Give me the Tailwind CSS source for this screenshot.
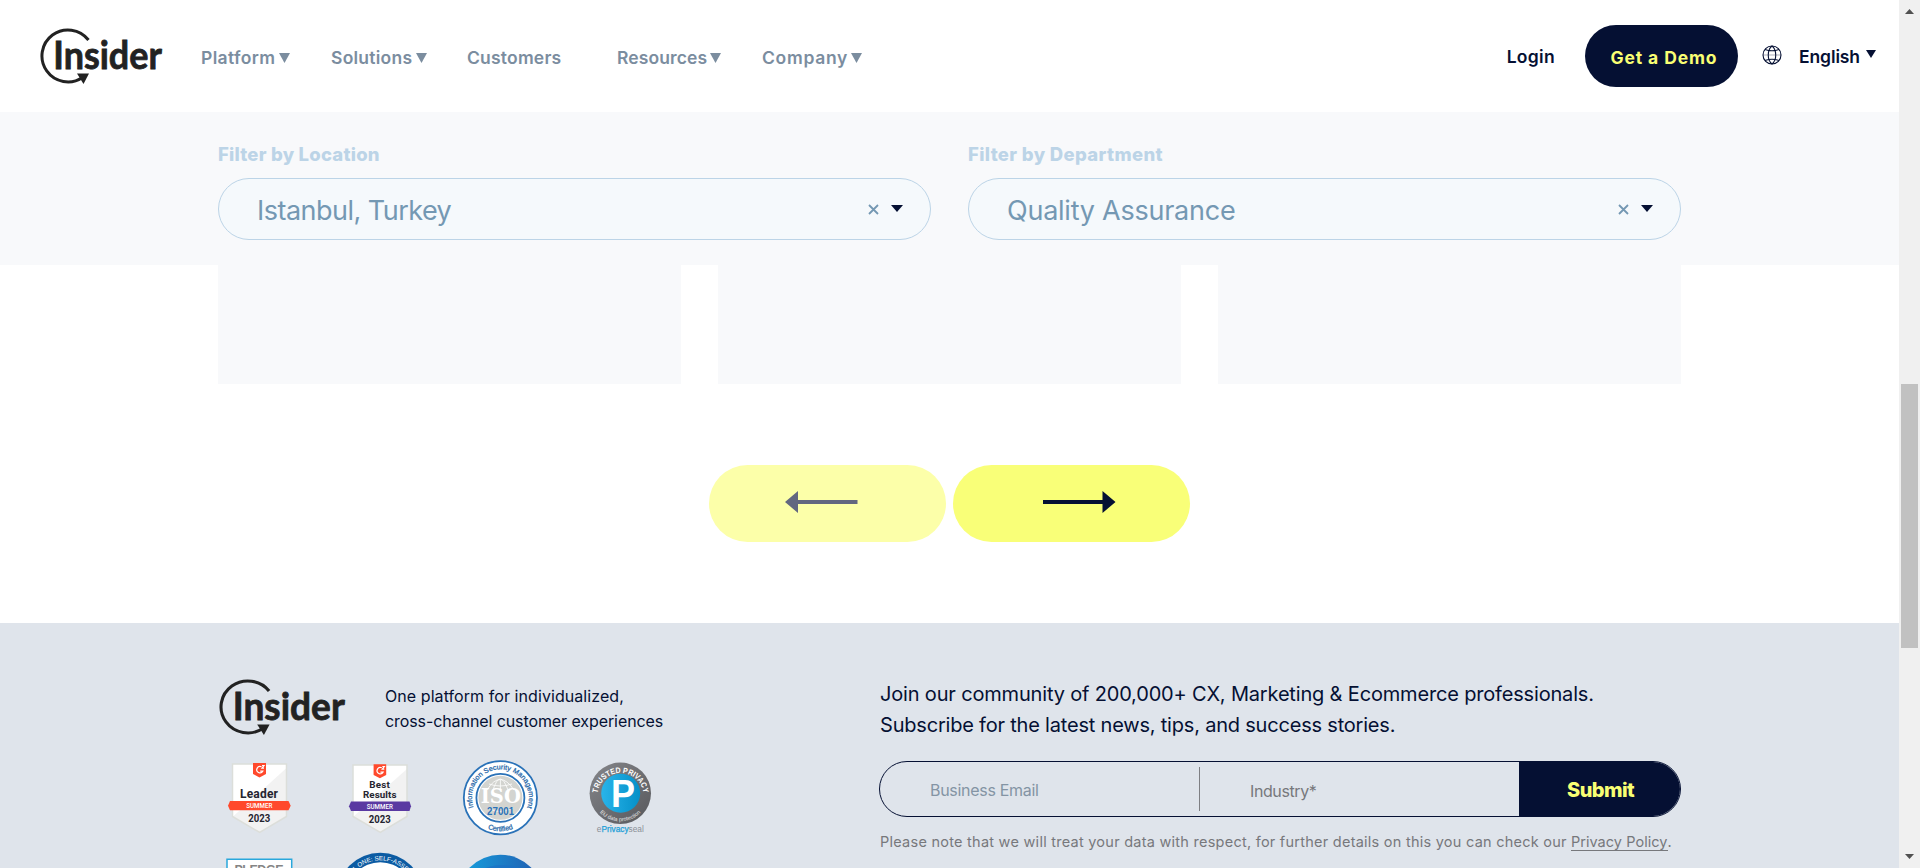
<!DOCTYPE html>
<html lang="en">
<head>
<meta charset="utf-8">
<title>Insider</title>
<script src="https://cdn.jsdelivr.net/npm/@tailwindcss/browser@4"></script>
</head>
<body class="flex h-[868px] w-[1920px] overflow-hidden bg-white font-['Inter',sans-serif] whitespace-nowrap text-[#051033]">
<svg class="hidden">
  <symbol id="logo" viewBox="0 0 123 57">
    <path d="M48.500 12A26 26 0 1 0 42.500 49.500" fill="none" stroke="#222" stroke-width="3"/>
    <path d="M37 45.500h12l-5.500 10.500z" fill="#222"/>
    <text x="13.300" y="41.300" font-family="Lato" font-weight="700" font-size="39" stroke="#222" stroke-width=".8" fill="#222" textLength="108.500" lengthAdjust="spacingAndGlyphs">Insider</text>
  </symbol>
</svg>
<div class="flex w-[1899px] flex-col">
  <header class="flex h-28 items-center pl-10 text-[17.5px] font-semibold text-[#7b8d9f]">
    <svg class="h-[57px] w-[123px]"><use href="#logo"/></svg>
    <nav class="ml-[38px] flex flex-1 pt-[4px]">
      <div class="flex w-[130px] items-center gap-1"><span class="tracking-[0.37px]">Platform</span><svg class="h-[10px] w-[11px]" fill="currentColor"><path d="M0 0h11L5.500 10z"/></svg></div>
      <div class="flex w-[136px] items-center gap-1"><span class="tracking-[0.25px]">Solutions</span><svg class="h-[10px] w-[11px]" fill="currentColor"><path d="M0 0h11L5.500 10z"/></svg></div>
      <div class="flex w-[150px] items-center"><span class="tracking-[0.2px]">Customers</span></div>
      <div class="flex w-[145px] items-center gap-[3px]"><span class="tracking-[0.1px]">Resources</span><svg class="h-[10px] w-[11px]" fill="currentColor"><path d="M0 0h11L5.500 10z"/></svg></div>
      <div class="flex items-center gap-[3px]"><span class="tracking-[0.69px]">Company</span><svg class="h-[10px] w-[11px]" fill="currentColor"><path d="M0 0h11L5.500 10z"/></svg></div>
    </nav>
    <div class="flex items-center text-[#051033]">
      <span class="mr-[30px] pt-[2px] tracking-[0.3px]">Login</span>
      <a class="mr-[24px] flex h-[62px] w-[153px] items-center justify-center rounded-full bg-[#051033] pt-[4px] pl-[5px] font-bold text-[#f9ff73]"><span class="tracking-[0.88px]">Get a Demo</span></a>
      <svg class="mr-[17px] mb-[2px] h-5 w-5" viewBox="0 0 20 20" fill="none" stroke="#051033" stroke-width="1.100"><circle cx="10" cy="10" r="9"/><path d="M10 1C5 5 5 15 10 19M10 1c5 4 5 14 0 18M3 4.500q7 2.500 14 0M3 15.500q7-2.500 14 0"/><path d="M1 10h18" stroke-opacity=".3"/></svg>
      <span class="pt-[2px] tracking-[-0.1px]">English</span>
      <svg class="mr-[23px] mb-1 ml-[6px] h-2 w-[10px]" fill="currentColor"><path d="M0 0h10L5 8z"/></svg>
    </div>
  </header>
  <section class="flex h-[153px] gap-[37px] bg-[#f8f9fb] px-[218px] pt-[29px]">
    <div class="w-[713px]">
      <div class="h-[37px] text-[18.5px] leading-[27px] font-extrabold text-[#bcd4e7]"><span class="tracking-[0.22px]">Filter by Location</span></div>
      <div class="flex h-[62px] items-center rounded-full border border-[#bcd4e7] bg-[#f5f9fc] pr-[27px] pl-[38px] text-[27px] text-[#7498b3]">
        <span class="flex-1 pt-[4px] tracking-[-0.52px]">Istanbul, Turkey</span>
        <svg class="mr-3 h-[11px] w-[11px]" fill="none" stroke="#7498b3" stroke-width="1.800"><path d="M1 1l9 9M10 1l-9 9"/></svg>
        <svg class="mb-[2px] h-[7px] w-3" fill="#051033"><path d="M0 0h12L6 7z"/></svg>
      </div>
    </div>
    <div class="w-[713px]">
      <div class="h-[37px] text-[18.5px] leading-[27px] font-extrabold text-[#bcd4e7]"><span class="tracking-[0.35px]">Filter by Department</span></div>
      <div class="flex h-[62px] items-center rounded-full border border-[#bcd4e7] bg-[#f5f9fc] pr-[27px] pl-[38px] text-[27px] text-[#7498b3]">
        <span class="flex-1 pt-[4px] tracking-[-0.24px]">Quality Assurance</span>
        <svg class="mr-3 h-[11px] w-[11px]" fill="none" stroke="#7498b3" stroke-width="1.800"><path d="M1 1l9 9M10 1l-9 9"/></svg>
        <svg class="mb-[2px] h-[7px] w-3" fill="#051033"><path d="M0 0h12L6 7z"/></svg>
      </div>
    </div>
  </section>
  <section class="flex h-[119px] gap-[37px] px-[218px]">
    <div class="w-[463px] bg-[#f8f9fb]"></div><div class="w-[463px] bg-[#f8f9fb]"></div><div class="w-[463px] bg-[#f8f9fb]"></div>
  </section>
  <section class="flex h-[239px] justify-center gap-[7px] pt-[81px]">
    <button class="h-[77px] w-[237px] rounded-full bg-[#fcffa9]"><svg class="h-[77px] w-[237px]" fill="#626780"><path d="M76 37L89 26v9h59.500v4H89v9z"/></svg></button>
    <button class="h-[77px] w-[237px] rounded-full bg-[#f9ff78]"><svg class="h-[77px] w-[237px]" fill="#051033"><path d="M162.500 37l-13 11v-9h-59.500v-4h59.500v-9z"/></svg></button>
  </section>
  <footer class="flex h-[245px] bg-[#dfe4eb]">
    <div class="w-[679px] pt-[56px] pl-[200px]">
      <div class="flex h-[71px] pl-[19px]">
        <svg class="h-[57px] w-[127px]" viewBox="0 0 123 57" preserveAspectRatio="none"><use href="#logo"/></svg>
        <p class="ml-[39px] pt-[5px] text-[16px] leading-[25px]"><span class="tracking-[0.07px]">One platform for individualized,</span><br><span class="tracking-[-0.09px]">cross-channel customer experiences</span></p>
      </div>
      <div class="grid w-[480px] grid-cols-4">
        <svg class="h-[100px] w-[120px]" font-family="Roboto" font-weight="700" text-anchor="middle" fill="#252530">
          <path d="M32.500 14h54v52.500L59.700 82.500 32.500 66.500z" fill="#fff"/><path d="M86.500 18v48.500L59.700 82.500 33 66.500z" fill="#f2f2f2"/><path d="M32.500 14h54v52.500L59.700 82.500 32.500 66.500z" fill="none" stroke="#dcdeda" stroke-width="1.500"/>
          <path d="M53 13h13v11l-6.500 3.500L53 24z" fill="#ff492c"/><path d="M61.500 16.800a3.200 3.200 0 1 0 1.300 4.400h-2.600M62 15.500h2l-2 2.600h2" fill="none" stroke="#fff" stroke-width="1.200"/>
          <text x="59" y="48.200" font-size="12" textLength="38">Leader</text>
          <path d="M30 51h58.500l2.200 4.700-2.200 4.600H30l-2-4.600z" fill="#ff492c"/>
          <text x="59.300" y="58.300" font-size="7" fill="#fff" font-weight="500" textLength="26" lengthAdjust="spacingAndGlyphs">SUMMER</text>
          <text x="59.200" y="72.300" font-size="10.500" textLength="22" lengthAdjust="spacingAndGlyphs">2023</text>
        </svg>
        <svg class="h-[100px] w-[120px]" font-family="Roboto" font-weight="700" text-anchor="middle" fill="#252530">
          <path d="M33 15h54v51.500L60.300 82.500 33 66.500z" fill="#fff"/><path d="M87 19v47.500L60.300 82.500 33.500 66.500z" fill="#f2f2f2"/><path d="M33 15h54v51.500L60.300 82.500 33 66.500z" fill="none" stroke="#dcdeda" stroke-width="1.500"/>
          <path d="M53.600 14.300h12.600V25l-6.300 3.200-6.300-3.200z" fill="#ff492c"/><path d="M61.800 17.800a3.200 3.200 0 1 0 1.300 4.400h-2.600M62.300 16.500h2l-2 2.600h2" fill="none" stroke="#fff" stroke-width="1.200"/>
          <text x="59.500" y="38.300" font-size="9.800" textLength="20.500">Best</text>
          <text x="59.700" y="48.300" font-size="9.800" textLength="33.500">Results</text>
          <path d="M31 51.500h58.500l1.500 4.700-1.500 4.800H31l-2-4.800z" fill="#5a39a2"/>
          <text x="59.800" y="58.800" font-size="7" fill="#fff" font-weight="500" textLength="26" lengthAdjust="spacingAndGlyphs">SUMMER</text>
          <text x="59.800" y="72.600" font-size="10.500" textLength="22" lengthAdjust="spacingAndGlyphs">2023</text>
        </svg>
        <svg class="h-[100px] w-[120px]" font-family="Liberation Sans" text-anchor="middle">
          <circle cx="60.400" cy="47.800" r="36.600" fill="#fff" stroke="#2a72b8" stroke-width="1.800"/>
          <circle cx="60.400" cy="47.800" r="24" fill="#fff" stroke="#2a72b8" stroke-width="1.800"/><circle cx="60.400" cy="47.800" r="22" fill="#d3d4d0"/>
          <g fill="none" stroke="#fff" stroke-width=".8"><path d="M47 40q13-21 27 0M53 40q7-22 15 0M60.400 30v10M49 34q11 4 23 0M48 58q12 7 25 0"/></g>
          <path id="isoTop" d="M34.100 58.800A28.500 28.500 0 1 1 86.700 58.800" fill="none"/><path id="isoBot" d="M27 47.800A33.400 33.400 0 0 0 93.800 47.800" fill="none"/>
          <text font-size="7" fill="#2466a8" stroke="#2466a8" stroke-width=".25"><textPath href="#isoTop" startOffset="50%" textLength="109" lengthAdjust="spacingAndGlyphs">Information Security Management</textPath></text>
          <text font-size="7" fill="#2466a8" stroke="#2466a8" stroke-width=".25"><textPath href="#isoBot" startOffset="50%">Certified</textPath></text>
          <text x="60.800" y="53.300" font-family="DejaVu Serif" font-weight="700" font-size="19.500" fill="#fff" textLength="40" lengthAdjust="spacingAndGlyphs">ISO</text>
          <text x="60.600" y="65.300" font-weight="700" font-size="10" fill="#2a72b8" textLength="27" lengthAdjust="spacingAndGlyphs">27001</text>
        </svg>
        <svg class="h-[100px] w-[120px]" font-family="Liberation Sans" text-anchor="middle">
          <defs><linearGradient id="gy" x1="0" y1="0" x2="1" y2="1"><stop offset="0" stop-color="#85868a"/><stop offset="1" stop-color="#57585c"/></linearGradient><linearGradient id="bl"><stop offset="0" stop-color="#29b4ea"/><stop offset="1" stop-color="#0590c8"/></linearGradient></defs>
          <circle cx="60.300" cy="43.300" r="30.700" fill="url(#gy)"/><circle cx="60.700" cy="43.300" r="19.500" fill="url(#bl)"/>
          <path id="tpTop" d="M37.500 46A23 23 0 1 1 83.500 46" fill="none"/><path id="tpBot" d="M32.300 43.300A28 28 0 0 0 88.300 43.300" fill="none"/>
          <text font-size="8" font-weight="700" fill="#fff"><textPath href="#tpTop" startOffset="50%" textLength="66" lengthAdjust="spacingAndGlyphs">TRUSTED PRIVACY</textPath></text>
          <text font-size="5.500" fill="#e4e4e4"><textPath href="#tpBot" startOffset="50%">EU data protection</textPath></text>
          <text x="63" y="57.300" font-weight="700" font-size="38" fill="#fff" textLength="24" lengthAdjust="spacingAndGlyphs">P</text>
          <text x="60.300" y="82.300" font-size="8.300" fill="#8b9097" textLength="47" lengthAdjust="spacingAndGlyphs">e<tspan fill="#1d9fd8" stroke="#1d9fd8" stroke-width=".25">Privacy</tspan>seal</text>
        </svg>
        <svg class="h-[18px] w-[120px]"><path d="M27 20V9.300h64.700V20" fill="#fff" stroke="#29a7dc" stroke-width="1.500"/><text x="59" y="24" text-anchor="middle" font-family="Liberation Sans" font-weight="700" font-size="12.500" fill="#858585" textLength="49">PLEDGE</text></svg>
        <svg class="h-[18px] w-[120px]"><circle cx="60.300" cy="45.700" r="43" fill="#0b5ba3"/><circle cx="60.300" cy="45.700" r="33.400" fill="#fff"/><path id="lv" d="M25 45.700A35.300 35.300 0 0 1 95.600 45.700" fill="none"/><text font-size="6.300" font-family="Liberation Sans" fill="#fff" text-anchor="middle"><textPath href="#lv" startOffset="51%" textLength="90">LEVEL ONE: SELF-ASSESSED</textPath></text></svg>
        <svg class="h-[18px] w-[120px]"><defs><linearGradient id="b2"><stop offset="0" stop-color="#15a3e0"/><stop offset="1" stop-color="#2159ae"/></linearGradient></defs><circle cx="60.400" cy="47.700" r="43" fill="url(#b2)"/><ellipse cx="63" cy="34" rx="33" ry="19" fill="#1c6fc4" opacity=".65"/></svg>
      </div>
    </div>
    <div class="ml-[200px] w-[802px] pt-[55px]">
      <p class="h-[83px] pt-px pl-px text-[20px] leading-[31px]"><span class="tracking-[-0.17px]">Join our community of 200,000+ CX, Marketing &amp; Ecommerce professionals.</span><br><span class="tracking-[-0.2px]">Subscribe for the latest news, tips, and success stories.</span></p>
      <form class="flex h-[56px] overflow-hidden rounded-full border border-[#051033] text-[16px]">
        <div class="flex w-[319px] items-center pl-[50px] text-[#8494a4]"><span class="pt-px tracking-[-0.3px]">Business Email</span></div>
        <div class="my-[5px] w-px bg-[#7e7f83]"></div>
        <div class="flex w-[319px] items-center pt-[3px] pl-[50px] text-[#77787c]"><span class="tracking-[-0.4px]">Industry*</span></div>
        <div class="flex flex-1 items-center bg-[#051033] pl-12 text-[20px] font-extrabold text-[#f9ff73]"><span class="pt-px tracking-[-0.56px]">Submit</span></div>
      </form>
      <p class="pt-[14px] pl-px text-[14.5px] leading-[22px] text-[#77787c]"><span class="tracking-[0.25px]">Please note that we will treat your data with respect, for further details on this you can check our</span> <span class="border-b border-[#77787c] tracking-[0.05px]">Privacy Policy</span>.</p>
    </div>
  </footer>
</div>
<aside class="flex w-[21px] flex-col items-center bg-[#f0f0f0]">
  <svg class="mt-[9px] h-[5px] w-[9px]" fill="#505050"><path d="M0 5L4.500 0 9 5z"/></svg>
  <div class="mt-[370px] h-[264px] w-[17px] bg-[#c1c1c1]"></div>
  <svg class="mt-auto mb-[9px] h-[5px] w-[9px]" fill="#505050"><path d="M0 0L4.500 5 9 0z"/></svg>
</aside>
</body>
</html>
